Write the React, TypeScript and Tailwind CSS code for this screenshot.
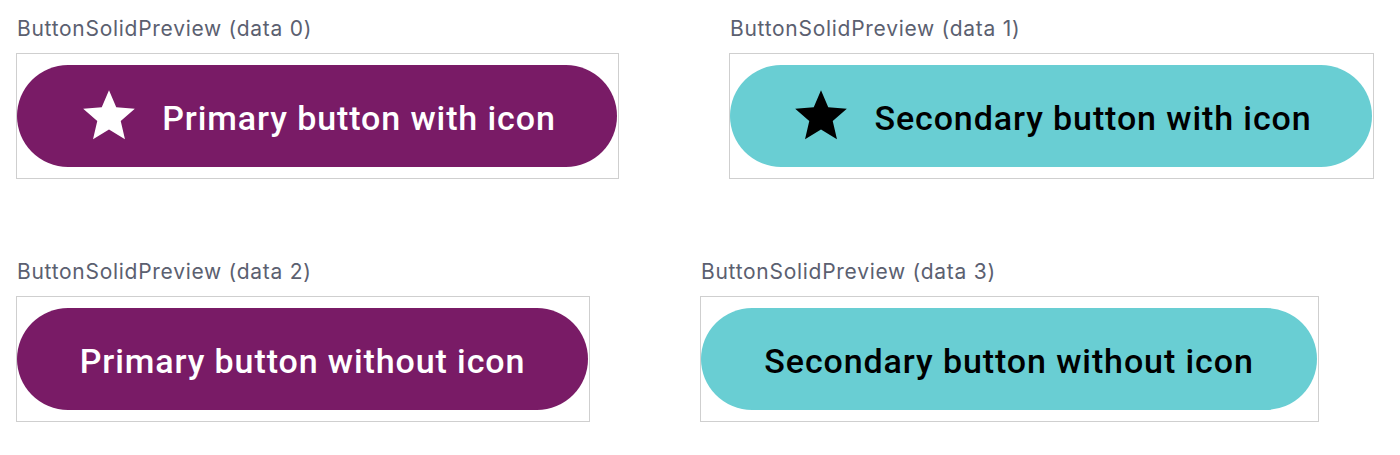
const StarIcon = ({ className }: { className?: string }) => (
  <svg viewBox="0 0 24 24" className={className} fill="currentColor">
    <path d="M12 17.27L18.18 21l-1.64-7.03L22 9.24l-7.19-.61L12 2 9.19 8.63 2 9.24l5.46 4.73L5.82 21z" />
  </svg>
);

type PreviewProps = {
  index: number;
  label: string;
  variant: "primary" | "secondary";
  withIcon: boolean;
  width: string;
};

const Preview = ({ index, label, variant, withIcon, width }: PreviewProps) => {
  const primary = variant === "primary";

  return (
    <div className="flex flex-col">
      <p className="pl-px text-[21px] leading-[28px] tracking-[0.72px] text-[#5b6070] font-['Inter',sans-serif]">
        ButtonSolidPreview (data {index})
      </p>
      <div className="mt-[10px] border border-[#cfcfcf] py-[11px] pr-px">
        <button
          className={
            primary
              ? `${width} h-[102px] rounded-full bg-[#791b66] text-white flex items-center justify-center gap-[22px]`
              : `${width} h-[102px] rounded-full bg-[#69ced3] text-black flex items-center justify-center gap-[22px]`
          }
        >
          {withIcon && <StarIcon className="w-[62px] h-[62px] shrink-0" />}
          <span className="pt-[3px] text-[34px] leading-[40px] font-medium font-['Roboto',sans-serif] tracking-[0.9px] whitespace-nowrap">
            {label}
          </span>
        </button>
      </div>
    </div>
  );
};

const App = () => {
  return (
    <div className="min-h-screen bg-white px-4 pt-[15px]">
      {/* row 1 */}
      <div className="flex gap-[110px]">
        <Preview index={0} label="Primary button with icon" variant="primary" withIcon width="w-[600px]" />
        <Preview index={1} label="Secondary button with icon" variant="secondary" withIcon width="w-[642px]" />
      </div>

      {/* row 2 */}
      <div className="flex gap-[110px] mt-[79px]">
        <Preview index={2} label="Primary button without icon" variant="primary" withIcon={false} width="w-[571px]" />
        <Preview index={3} label="Secondary button without icon" variant="secondary" withIcon={false} width="w-[616px]" />
      </div>
    </div>
  );
};

export default App;
